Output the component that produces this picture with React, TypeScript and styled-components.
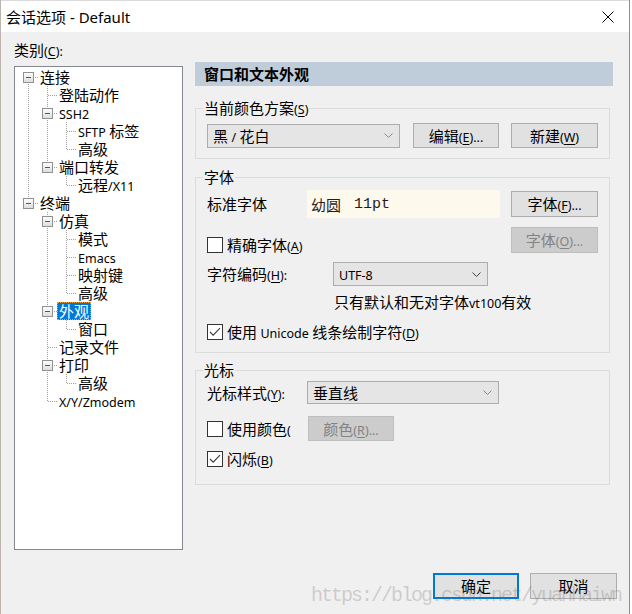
import React from 'react';
import styled, { createGlobalStyle, css } from 'styled-components';

const FONT = `"Noto Sans CJK SC", "Noto Sans", sans-serif`;
const TITLE_FONT = `"Noto Sans", "Noto Sans CJK SC", sans-serif`;

const Global = createGlobalStyle`
  html, body { margin: 0; padding: 0; background: #ffffff; }
  body { font-family: ${FONT}; font-size: 15px; color: #000; }
  #root { width: 632px; height: 614px; overflow: hidden; }
`;

const Window = styled.div`
  position: relative;
  box-sizing: border-box;
  width: 630px;
  height: 614px;
  border-left: 1px solid #bdb5ad;
  border-right: 1px solid #8e8e8e;
  display: flex;
  flex-direction: column;
  background: #f0f0f0;
`;

const TitleBar = styled.div`
  box-sizing: border-box;
  flex: none;
  height: 32px;
  background: #ffffff;
  border-top: 1px solid #dcdcdc;
  display: flex;
  align-items: center;
  justify-content: space-between;
  padding: 0 15px 0 5px;
`;

const Title = styled.div`
  font-family: ${TITLE_FONT};
  font-size: 15px;
  line-height: 20px;
`;

const Body = styled.div`
  flex: 1;
  display: flex;
  flex-direction: column;
  padding: 0 12px 0 13px;
`;

const Main = styled.div`
  display: flex;
  align-items: flex-start;
`;

const LeftCol = styled.div`
  width: 169px;
  flex: none;
  padding-top: 8px;
  display: flex;
  flex-direction: column;
`;

const Caption = styled.div`
  height: 20px;
  line-height: 20px;
  margin-bottom: 6px;
`;

const TreeBox = styled.div`
  box-sizing: border-box;
  height: 484px;
  border: 1px solid #828790;
  background: #ffffff;
  padding: 1px 0 0 4px;
`;

const TreeRow = styled.div`
  display: flex;
  height: 18px;
`;

const TreeLabel = styled.span<{ $selected?: boolean }>`
  height: 18px;
  line-height: 18px;
  padding: 0 2px;
  white-space: nowrap;
  ${(p) =>
    p.$selected &&
    css`
      background: #0078d7;
      color: #ffffff;
      outline: 1px dotted #e8a040;
      outline-offset: -1px;
    `}
`;

const RightCol = styled.div`
  width: 418px;
  margin-left: 12px;
  padding-top: 30px;
  display: flex;
  flex-direction: column;
`;

const Header = styled.div`
  height: 24px;
  line-height: 24px;
  padding-left: 9px;
  background: #bfcddb;
  font-weight: 700;
`;

const Group = styled.fieldset<{ $mt: number; $pt: number; $pb: number }>`
  box-sizing: border-box;
  width: 415px;
  min-width: 0;
  margin: ${(p) => p.$mt}px 0 0 0;
  padding: ${(p) => p.$pt}px 11px ${(p) => p.$pb}px 11px;
  border: 1px solid #dcdcdc;
`;

const Legend = styled.legend`
  height: 20px;
  padding: 0 1px;
  margin-left: -4px;
  line-height: 20px;
  font-size: 15px;
`;

const Row = styled.div<{ $h: number; $mt?: number; $pl?: number }>`
  display: flex;
  align-items: center;
  height: ${(p) => p.$h}px;
  margin-top: ${(p) => p.$mt ?? 0}px;
  padding-left: ${(p) => p.$pl ?? 0}px;
  white-space: nowrap;
`;

const FieldLabel = styled.span<{ $w: number }>`
  width: ${(p) => p.$w}px;
  flex: none;
  line-height: 20px;
  white-space: nowrap;
`;

const Note = styled.span`
  line-height: 20px;
`;

const Lt = styled.span`
  font-family: "Noto Sans", sans-serif;
  font-size: 12.5px;
  line-height: 1;
`;

const Mn = styled.span`
  text-decoration: underline;
  text-underline-offset: 2px;
`;

const Button = styled.button<{ $w: number; $h?: number; $ml?: number; $variant?: 'default' | 'disabled' }>`
  box-sizing: border-box;
  flex: none;
  width: ${(p) => p.$w}px;
  height: ${(p) => p.$h ?? 26}px;
  margin-left: ${(p) => (p.$ml === undefined ? '0' : p.$ml < 0 ? 'auto' : `${p.$ml}px`)};
  padding: 0;
  font-family: ${FONT};
  font-size: 15px;
  line-height: 20px;
  color: #000000;
  background: #e1e1e1;
  border: 1px solid #adadad;
  white-space: nowrap;
  ${(p) =>
    p.$variant === 'default' &&
    css`
      border: 2px solid #0078d7;
    `}
  ${(p) =>
    p.$variant === 'disabled' &&
    css`
      background: #cccccc;
      border-color: #bfbfbf;
      color: #838383;
    `}
`;

const Combo = styled.div<{ $w: number; $h: number }>`
  box-sizing: border-box;
  flex: none;
  width: ${(p) => p.$w}px;
  height: ${(p) => p.$h}px;
  display: flex;
  align-items: center;
  justify-content: space-between;
  padding: 0 6px 0 5px;
  background: #e5e5e5;
  border: 1px solid #adadad;
  line-height: 20px;
`;

const Preview = styled.div`
  box-sizing: border-box;
  flex: none;
  width: 193px;
  height: 28px;
  padding-left: 4px;
  display: flex;
  align-items: center;
  background: #fdf9ec;
  color: #2a1a1a;
  white-space: pre;
`;

const PreviewFace = styled.span`
  font-family: "Noto Sans CJK SC", sans-serif;
  font-size: 15px;
`;

const PreviewSize = styled.span`
  margin-left: 13px;
  font-family: "Liberation Mono", monospace;
  font-size: 15px;
`;

const CheckItem = styled.label<{ $w?: number; $end?: boolean }>`
  display: flex;
  align-items: center;
  gap: 4px;
  height: 20px;
  line-height: 20px;
  white-space: nowrap;
  ${(p) => (p.$w ? `width: ${p.$w}px; flex: none;` : '')}
  ${(p) => (p.$end ? 'align-self: flex-end; margin-right: auto; margin-bottom: -2px;' : '')}
`;

const Box = styled.span`
  box-sizing: border-box;
  width: 16px;
  height: 16px;
  flex: none;
  border: 1px solid #333333;
  background: #ffffff;
  display: flex;
  align-items: center;
  justify-content: center;
`;

const ButtonBar = styled.div`
  display: flex;
  justify-content: flex-end;
  gap: 11px;
  margin-top: 23px;
`;

const Watermark = styled.div`
  position: absolute;
  left: 310px;
  top: 586px;
  font-family: "Liberation Mono", monospace;
  font-size: 20px;
  line-height: 20px;
  letter-spacing: -2px;
  color: rgba(110, 110, 110, 0.28);
  white-space: nowrap;
  pointer-events: none;
`;

/* Text with Latin runs set smaller (as the dialog font does) and "&X" as an underlined mnemonic */
function T({ s }: { s: string }) {
  const parts = s.split(/([!-~](?:[ -~]*[!-~])?)/);
  return (
    <>
      {parts.map((p, i) => {
        if (i % 2 === 0) return p;
        const m = p.split(/&(.)/);
        return <Lt key={i}>{m.map((q, j) => (j % 2 ? <Mn key={j}>{q}</Mn> : q))}</Lt>;
      })}
    </>
  );
}

type Node = { label: string; selected?: boolean; children?: Node[] };

const tree: Node[] = [
  {
    label: '连接',
    children: [
      { label: '登陆动作' },
      { label: 'SSH2', children: [{ label: 'SFTP 标签' }, { label: '高级' }] },
      { label: '端口转发', children: [{ label: '远程/X11' }] },
    ],
  },
  {
    label: '终端',
    children: [
      {
        label: '仿真',
        children: [{ label: '模式' }, { label: 'Emacs' }, { label: '映射键' }, { label: '高级' }],
      },
      { label: '外观', selected: true, children: [{ label: '窗口' }] },
      { label: '记录文件' },
      { label: '打印', children: [{ label: '高级' }] },
      { label: 'X/Y/Zmodem' },
    ],
  },
];

type FlatRow = { node: Node; cont: boolean[]; isLast: boolean; isFirstRoot: boolean };

function flatten(nodes: Node[], cont: boolean[], out: FlatRow[]) {
  nodes.forEach((n, i) => {
    const isLast = i === nodes.length - 1;
    out.push({ node: n, cont, isLast, isFirstRoot: cont.length === 0 && i === 0 });
    if (n.children) flatten(n.children, [...cont, !isLast], out);
  });
  return out;
}

const LINE = '#a0a0a0';

function Guide({
  top,
  bottom,
  branch,
  expander,
}: {
  top: boolean;
  bottom: boolean;
  branch?: boolean;
  expander?: boolean;
}) {
  return (
    <svg width={19} height={18} viewBox="0 0 19 18" shapeRendering="crispEdges" style={{ flex: 'none' }}>
      {top && <line x1={9.5} y1={0} x2={9.5} y2={bottom ? 18 : 10} stroke={LINE} strokeDasharray="1 1" />}
      {!top && bottom && <line x1={9.5} y1={10} x2={9.5} y2={18} stroke={LINE} strokeDasharray="1 1" />}
      {branch && <line x1={10} y1={9.5} x2={19} y2={9.5} stroke={LINE} strokeDasharray="1 1" />}
      {expander && (
        <g>
          <defs>
            <linearGradient id="exg" x1="0" y1="0" x2="0" y2="1">
              <stop offset="0" stopColor="#ffffff" />
              <stop offset="1" stopColor="#dcdcdc" />
            </linearGradient>
          </defs>
          <rect x={4.5} y={4.5} width={10} height={10} fill="url(#exg)" stroke="#919191" />
          <line x1={7} y1={9.5} x2={12} y2={9.5} stroke="#3b5998" />
        </g>
      )}
    </svg>
  );
}

function Chevron({ color = '#707070' }: { color?: string }) {
  return (
    <svg width={9} height={5} viewBox="0 0 9 5">
      <polyline points="0.5,0.5 4.5,4.5 8.5,0.5" fill="none" stroke={color} strokeWidth={1} />
    </svg>
  );
}

function Check() {
  return (
    <svg width={14} height={14} viewBox="0 0 14 14">
      <polyline points="2,7 5.2,10.2 12,3.2" fill="none" stroke="#3a3a3a" strokeWidth={1.1} />
    </svg>
  );
}

function CheckBox({ checked, s, w, end }: { checked?: boolean; s: string; w?: number; end?: boolean }) {
  return (
    <CheckItem $w={w} $end={end}>
      <Box>{checked && <Check />}</Box>
      <span>
        <T s={s} />
      </span>
    </CheckItem>
  );
}

export default function App() {
  const rows = flatten(tree, [], []);
  return (
    <>
      <Global />
      <Window>
        <TitleBar>
          <Title>会话选项 - Default</Title>
          <svg width={12} height={12} viewBox="0 0 12 12">
            <line x1={0.5} y1={0.5} x2={11.5} y2={11.5} stroke="#000" strokeWidth={1} />
            <line x1={11.5} y1={0.5} x2={0.5} y2={11.5} stroke="#000" strokeWidth={1} />
          </svg>
        </TitleBar>
        <Body>
          <Main>
            <LeftCol>
              <Caption>
                <T s="类别(&C):" />
              </Caption>
              <TreeBox>
                {rows.map((r, i) => (
                  <TreeRow key={i}>
                    {r.cont.map((c, j) => (
                      <Guide key={j} top={c} bottom={c} />
                    ))}
                    <Guide top={!r.isFirstRoot} bottom={!r.isLast} branch expander={!!r.node.children} />
                    <TreeLabel $selected={r.node.selected}>
                      <T s={r.node.label} />
                    </TreeLabel>
                  </TreeRow>
                ))}
              </TreeBox>
            </LeftCol>
            <RightCol>
              <Header>窗口和文本外观</Header>

              <Group $mt={12} $pt={5} $pb={10}>
                <Legend>
                  <T s="当前颜色方案(&S)" />
                </Legend>
                <Row $h={25}>
                  <Combo $w={193} $h={24}>
                    <span>
                      <T s="黑 / 花白" />
                    </span>
                    <Chevron color="#8a8a8a" />
                  </Combo>
                  <Button $w={86} $h={25} $ml={13}>
                    <T s="编辑(&E)..." />
                  </Button>
                  <Button $w={87} $h={25} $ml={-1}>
                    <T s="新建(&W)" />
                  </Button>
                </Row>
              </Group>

              <Group $mt={8} $pt={3} $pb={10}>
                <Legend>字体</Legend>
                <Row $h={28}>
                  <FieldLabel $w={100}>标准字体</FieldLabel>
                  <Preview>
                    <PreviewFace>幼圆</PreviewFace>
                    <PreviewSize>11pt</PreviewSize>
                  </Preview>
                  <Button $w={87} $h={26} $ml={-1}>
                    <T s="字体(&F)..." />
                  </Button>
                </Row>
                <Row $h={26} $mt={9}>
                  <CheckBox end s="精确字体(&A)" />
                  <Button $w={87} $h={26} $variant="disabled">
                    <T s="字体(&O)..." />
                  </Button>
                </Row>
                <Row $h={24} $mt={9}>
                  <FieldLabel $w={126}>
                    <T s="字符编码(&H):" />
                  </FieldLabel>
                  <Combo $w={155} $h={24}>
                    <span>
                      <T s="UTF-8" />
                    </span>
                    <Chevron color="#404040" />
                  </Combo>
                </Row>
                <Row $h={20} $mt={6} $pl={127}>
                  <Note>
                    <T s="只有默认和无对字体vt100有效" />
                  </Note>
                </Row>
                <Row $h={20} $mt={10}>
                  <CheckBox checked s="使用 Unicode 线条绘制字符(&D)" />
                </Row>
              </Group>

              <Group $mt={7} $pt={1} $pb={15}>
                <Legend>光标</Legend>
                <Row $h={23}>
                  <FieldLabel $w={100}>
                    <T s="光标样式(&Y):" />
                  </FieldLabel>
                  <Combo $w={192} $h={23}>
                    <span>垂直线</span>
                    <Chevron color="#8a8a8a" />
                  </Combo>
                </Row>
                <Row $h={25} $mt={12}>
                  <CheckBox w={101} s="使用颜色(" />
                  <Button $w={86} $h={25} $variant="disabled">
                    <T s="颜色(&R)..." />
                  </Button>
                </Row>
                <Row $h={20} $mt={8}>
                  <CheckBox checked s="闪烁(&B)" />
                </Row>
              </Group>
            </RightCol>
          </Main>
          <ButtonBar>
            <Button $w={86} $h={26} $variant="default">
              确定
            </Button>
            <Button $w={87} $h={26}>
              取消
            </Button>
          </ButtonBar>
        </Body>
        <Watermark>https://blog.csdn.net/yuanhaiwn</Watermark>
      </Window>
    </>
  );
}
